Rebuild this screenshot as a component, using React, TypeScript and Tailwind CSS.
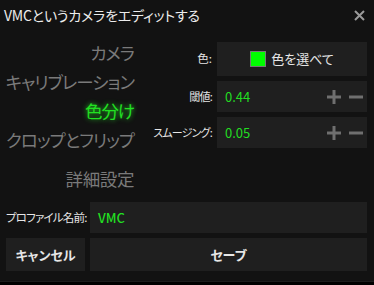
import React from 'react';

const font = "[font-family:'Noto_Sans_CJK_JP','Noto_Sans',sans-serif] [font-feature-settings:'palt']";

const navItems = [
  { label: 'カメラ', active: false },
  { label: 'キャリブレーション', active: false },
  { label: '色分け', active: true },
  { label: 'クロップとフリップ', active: false },
];

const PlusMinus = () => (
  <div className="flex items-center gap-[8px] pr-[4px]">
    <svg width="14" height="14" viewBox="0 0 14 14">
      <rect x="5.5" y="0" width="3" height="14" fill="#6f6f6f" />
      <rect x="0" y="5.5" width="14" height="3" fill="#6f6f6f" />
    </svg>
    <svg width="14" height="14" viewBox="0 0 14 14">
      <rect x="0" y="5.5" width="14" height="3" fill="#6f6f6f" />
    </svg>
  </div>
);

const ValueRow = ({ label, value }: { label: string; value: string }) => (
  <div className="flex items-center gap-[5px]">
    <div className="w-[72px] text-right text-[11px] tracking-[-0.8px] text-[#e6e6e6] whitespace-nowrap">{label}</div>
    <div className="w-[150px] h-[31px] bg-[#1f1f1f] flex items-center justify-between pl-[8px]">
      <span className="text-[13px] text-[#22dd22]">{value}</span>
      <PlusMinus />
    </div>
  </div>
);

export default function App() {
  return (
    <div className={`w-[374px] h-[285px] bg-[#121212] flex flex-col ${font}`}>
      <div className="h-[30px] flex items-center justify-between pl-[4px] pr-[9px]">
        <span className="text-[14px] tracking-[-0.2px] text-[#ececec]">VMCというカメラをエディットする</span>
        <svg width="11" height="11" viewBox="0 0 11 11">
          <path d="M1 1 L10 10 M10 1 L1 10" stroke="#9a9a9a" strokeWidth="2" />
        </svg>
      </div>

      <div className="h-[172px] flex">
        <div className="w-[134px] pt-[8px] flex flex-col items-end">
          {navItems.map((item) => (
            <div
              key={item.label}
              className={`h-[29px] leading-[29px] text-[17.5px] tracking-[-1px] whitespace-nowrap ${
                item.active ? 'text-[#22e022] [text-shadow:0_0_5px_#22cc22]' : 'text-[#7a7a7a]'
              }`}
            >
              {item.label}
            </div>
          ))}
          <div className="mt-[10px] h-[29px] leading-[29px] text-[17.5px] tracking-[-0.4px] text-[#7a7a7a]">詳細設定</div>
        </div>

        <div className="ml-[6px] pt-[12px] flex flex-col gap-[5px]">
          <div className="flex items-center gap-[5px]">
            <div className="w-[72px] text-right text-[11.5px] text-[#e6e6e6]">色:</div>
            <div className="w-[150px] h-[34px] bg-[#1f1f1f] flex items-center justify-center gap-[5px]">
              <div className="w-[16px] h-[16px] bg-[#00ff00] border border-[#777]" />
              <span className="text-[13px] text-[#e6e6e6]">色を選べて</span>
            </div>
          </div>
          <ValueRow label="閾値:" value="0.44" />
          <ValueRow label="スムージング:" value="0.05" />
        </div>
      </div>

      <div className="mx-[6px] flex items-center gap-[5px]">
        <div className="w-[79px] text-[11.5px] tracking-[-0.8px] text-[#e6e6e6] whitespace-nowrap">プロファイル名前:</div>
        <div className="w-[277px] h-[31px] bg-[#1f1f1f] flex items-center pl-[8px]">
          <span className="text-[13px] font-medium text-[#22dd22]">VMC</span>
        </div>
      </div>

      <div className="mx-[6px] mt-[5px] flex gap-[5px]">
        <button className="w-[79px] h-[33px] bg-[#1f1f1f] text-[13px] font-bold text-[#e6e6e6]">キャンセル</button>
        <button className="w-[277px] h-[33px] bg-[#1f1f1f] text-[13px] font-bold text-[#e6e6e6]">セーブ</button>
      </div>

      <div className="mt-[10px] h-[1px] bg-[#1d1d1d]" />
      <div className="flex-1 bg-black" />
    </div>
  );
}
